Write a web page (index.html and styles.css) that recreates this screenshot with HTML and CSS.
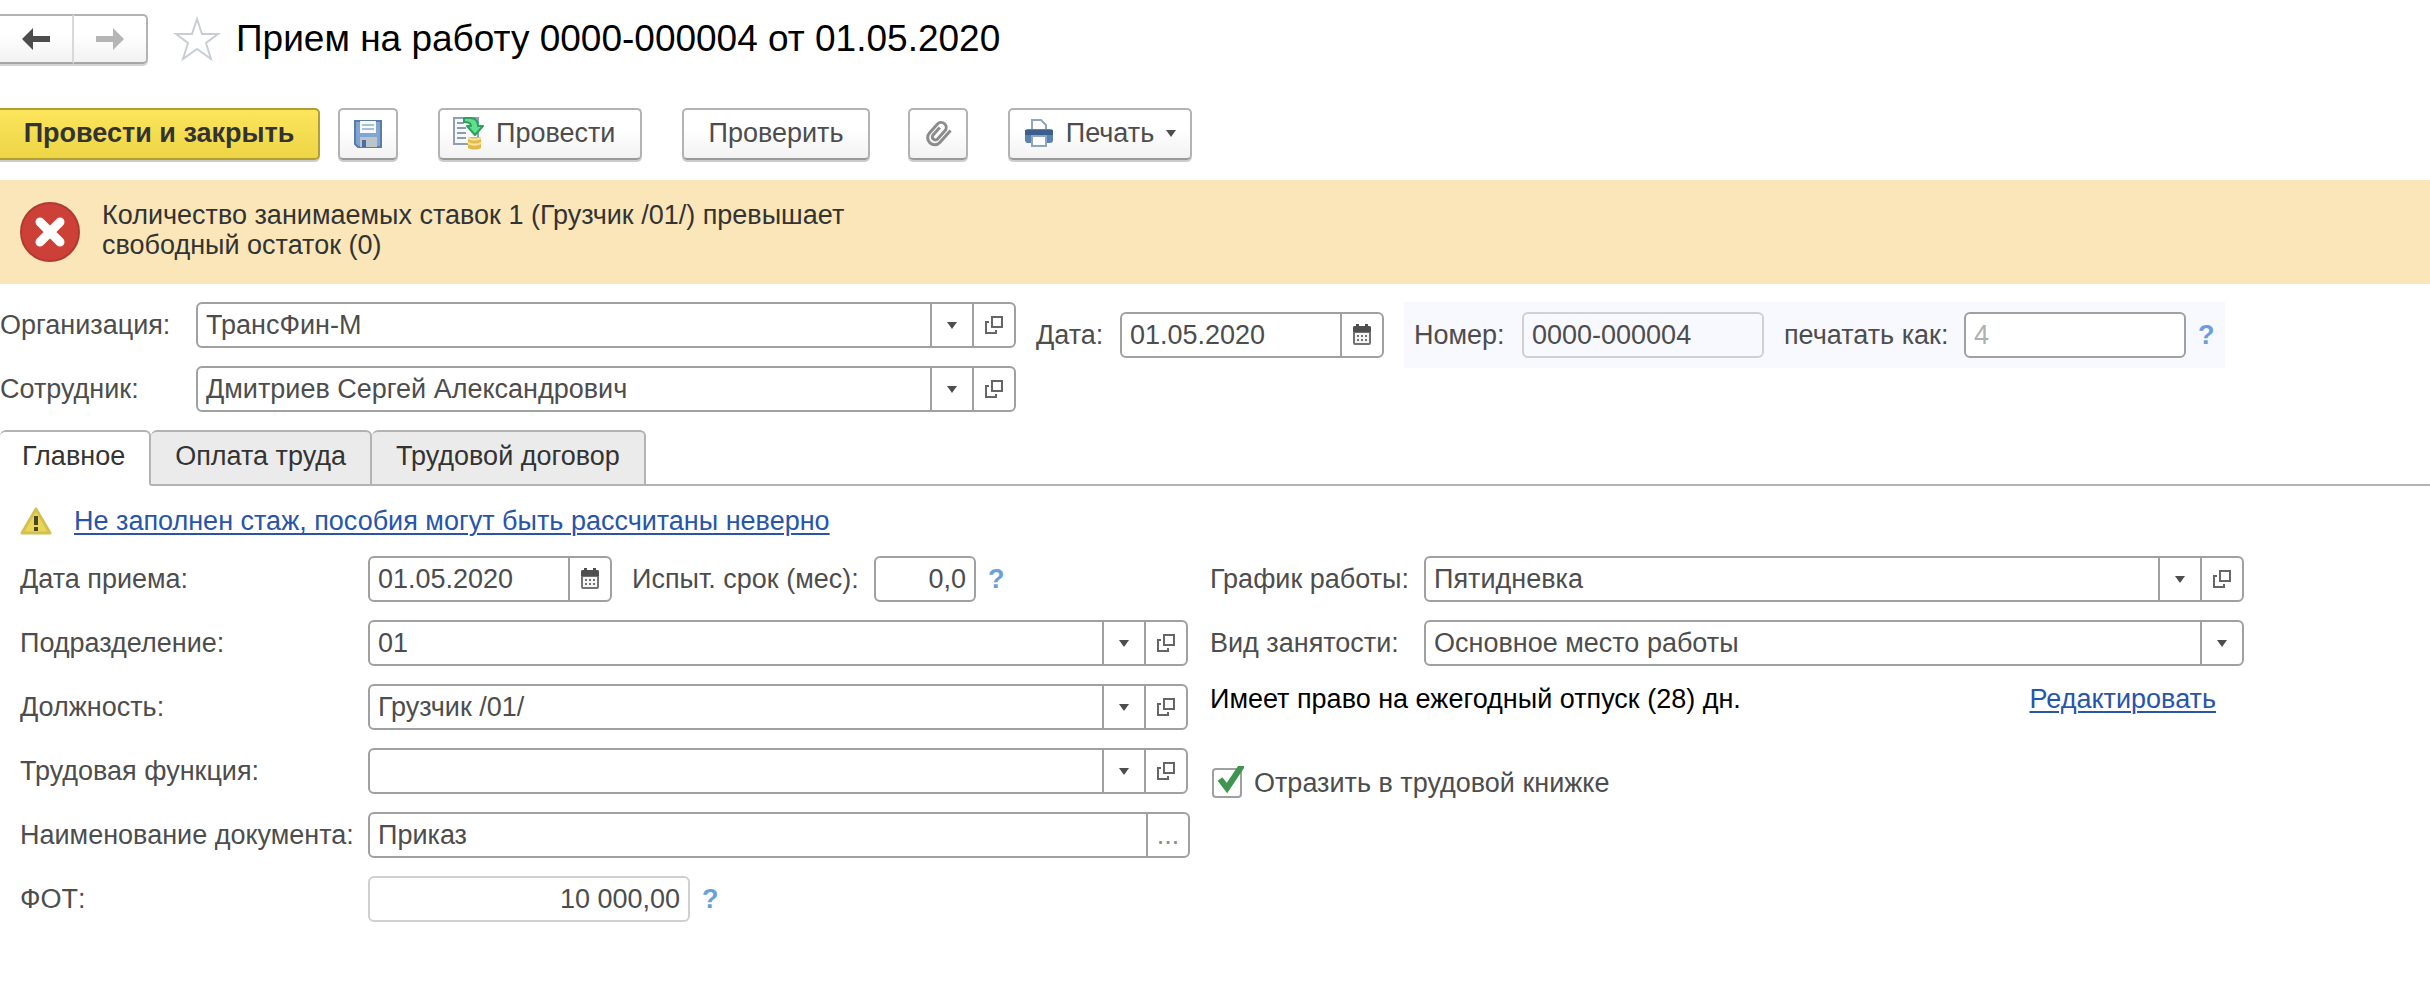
FILE: index.html
```html
<!DOCTYPE html>
<html lang="ru">
<head>
<meta charset="utf-8">
<title>Прием на работу 0000-000004 от 01.05.2020</title>
<meta name="viewport" content="width=device-width, initial-scale=1">
<link rel="stylesheet" href="styles.css">
</head>
<body>
<svg class="sprite" aria-hidden="true">
  <symbol id="caret" viewBox="0 0 10 7"><path d="M0 0h10L5 7z" fill="#4d4d4d"/></symbol>
  <symbol id="open" viewBox="0 0 20 20"><path d="M8 2h10v10H8z" fill="none" stroke="#666" stroke-width="2"/><path d="M5 7H2v11h10v-3" fill="none" stroke="#666" stroke-width="2"/></symbol>
  <symbol id="calendar" viewBox="0 0 20 22"><rect x="1" y="2" width="18" height="19" rx="2" fill="#737373"/><path d="M1 4q0-2 2-2h14q2 0 2 2v4H1z" fill="#4f4f4f"/><path d="M4 0h3v4H4zM13 0h3v4h-3z" fill="#4f4f4f"/><path d="M3 9h14v10H3z" fill="#f4f4f4"/><path d="M5 12h11M5 16h11" stroke="#737373" stroke-width="2" stroke-dasharray="2 2"/></symbol>
</svg>

<header class="header">
  <nav class="history" aria-label="История">
    <button type="button" class="history-button" aria-label="Назад"><svg width="30" height="24" viewBox="0 0 30 24"><path d="M1 12L12 1v8h17v6H12v8z" fill="#4d4d4d"/></svg></button>
    <button type="button" class="history-button history-next" aria-label="Вперед"><svg width="30" height="24" viewBox="0 0 30 24"><path d="M29 12L18 1v8H1v6h17v8z" fill="#b5b5b5"/></svg></button>
  </nav>
  <button type="button" class="star" aria-label="В избранное"><svg width="48" height="46" viewBox="0 0 48 46"><path d="M24 3l5 15h16L33 27l5 16-14-10-14 10 5-16L3 18h16z" fill="#fff" stroke="#c9ced4" stroke-width="2"/></svg></button>
  <h1 class="title">Прием на работу 0000-000004 от 01.05.2020</h1>
</header>

<div class="toolbar" role="toolbar">
  <button type="button" class="button button-primary">Провести и закрыть</button>
  <button type="button" class="button button-icon button-save" aria-label="Записать"><svg width="30" height="30" viewBox="0 0 30 30"><path d="M2 2h26v26H5l-3-3z" fill="#80a5d3" stroke="#587dad" stroke-width="2"/><path d="M7 2h16v12H7z" fill="#f7fafd"/><path d="M9 6h12M9 10h12" stroke="#a9bdd6" stroke-width="2"/><path d="M7 18h17v10H7z" fill="#bcc5ca"/><path d="M9 21h4v7H9z" fill="#4a6ea2"/></svg></button>
  <button type="button" class="button button-post"><svg width="32" height="34" viewBox="0 0 32 34"><path d="M2 2h24v26H2z" fill="#f6f9fb" stroke="#8fa0b4" stroke-width="2"/><path d="M5 7h7M5 12h9M5 17h9M5 22h9" stroke="#8e9cab" stroke-width="2"/><path d="M12 2h6c6 0 8 3 8 8h5l-8 9-8-9h4c0-3-2-4-7-4z" fill="#5fe08f" stroke="#2f9f5c" stroke-width="2" stroke-linejoin="round"/><path d="M16 21h13v11c-3 2-10 2-13 0z" fill="#e3b94c"/><path d="M16 22c4 2 9 2 13 0M16 27c4 2 9 2 13 0" stroke="#f9e596" stroke-width="2" fill="none"/></svg>Провести</button>
  <button type="button" class="button button-check">Проверить</button>
  <button type="button" class="button button-icon button-attach" aria-label="Присоединенные файлы"><svg width="30" height="30" viewBox="0 0 30 30"><path transform="rotate(42 15 15)" d="M22 4v16a7 7 0 0 1-14 0V8a5 5 0 0 1 10 0v11a3 3 0 0 1-6 0V9" fill="none" stroke="#8c8c8c" stroke-width="3"/></svg></button>
  <button type="button" class="button button-print"><svg width="30" height="30" viewBox="0 0 30 30"><path d="M8 12V2h9l5 5v5" fill="#fff" stroke="#8fa6c2" stroke-width="2"/><rect x="1" y="11" width="28" height="14" rx="3" fill="#5d82ae"/><rect x="1" y="12" width="28" height="5" fill="#3d5f8c"/><path d="M8 18h14v10H8z" fill="#fff" stroke="#8fa6c2" stroke-width="2"/></svg>Печать<svg class="print-caret" width="10" height="7"><use href="#caret"/></svg></button>
</div>

<section class="alert" role="alert">
  <svg width="60" height="62" viewBox="0 0 60 62"><circle cx="30" cy="31" r="29" fill="#cc4037" stroke="#b23a31" stroke-width="2"/><path d="M20 21l20 20M40 21L20 41" stroke="#fff" stroke-width="9" stroke-linecap="round"/></svg>
  <p class="alert-text">Количество занимаемых ставок 1 (Грузчик /01/) превышает свободный остаток (0)</p>
</section>

<form>
<div class="document">
  <div class="parties">
    <label for="org">Организация:</label>
    <div class="field"><input id="org" type="text" value="ТрансФин-М"><button type="button" aria-label="Выбрать"><svg width="10" height="7"><use href="#caret"/></svg></button><button type="button" aria-label="Открыть"><svg width="20" height="20"><use href="#open"/></svg></button></div>
    <label for="employee">Сотрудник:</label>
    <div class="field"><input id="employee" type="text" value="Дмитриев Сергей Александрович"><button type="button" aria-label="Выбрать"><svg width="10" height="7"><use href="#caret"/></svg></button><button type="button" aria-label="Открыть"><svg width="20" height="20"><use href="#open"/></svg></button></div>
  </div>
  <div class="document-date">
    <label for="date">Дата:</label>
    <div class="field"><input id="date" type="text" value="01.05.2020"><button type="button" aria-label="Календарь"><svg width="20" height="22"><use href="#calendar"/></svg></button></div>
  </div>
  <div class="number">
    <label for="number">Номер:</label>
    <div class="field field-readonly number-value"><input id="number" type="text" value="0000-000004" readonly></div>
    <label for="print-as" class="print-as-label">печатать как:</label>
    <div class="field number-print"><input id="print-as" type="text" placeholder="4"></div>
    <button type="button" class="help">?</button>
  </div>
</div>

<div class="tabs" role="tablist">
  <button type="button" class="tab tab-active" role="tab" aria-selected="true">Главное</button>
  <button type="button" class="tab" role="tab" aria-selected="false">Оплата труда</button>
  <button type="button" class="tab" role="tab" aria-selected="false">Трудовой договор</button>
</div>

<p class="notice">
  <svg width="32" height="28" viewBox="0 0 32 28"><path d="M16 2l14 24H2z" fill="#ecd658" stroke="#d3c050" stroke-width="3" stroke-linejoin="round"/><path d="M14 9h4v9h-4zM14 20h4v4h-4z" fill="#4a4522"/></svg>
  <a href="#experience">Не заполнен стаж, пособия могут быть рассчитаны неверно</a>
</p>

<div class="main">
  <div class="left">
    <label for="hire-date">Дата приема:</label>
    <div class="inline">
      <div class="field hire-date"><input id="hire-date" type="text" value="01.05.2020"><button type="button" aria-label="Календарь"><svg width="20" height="22"><use href="#calendar"/></svg></button></div>
      <label for="probation" class="probation-label">Испыт. срок (мес):</label>
      <div class="field probation"><input id="probation" class="numeric" type="text" value="0,0"></div>
      <button type="button" class="help">?</button>
    </div>
    <label for="department">Подразделение:</label>
    <div class="field lookup"><input id="department" type="text" value="01"><button type="button" aria-label="Выбрать"><svg width="10" height="7"><use href="#caret"/></svg></button><button type="button" aria-label="Открыть"><svg width="20" height="20"><use href="#open"/></svg></button></div>
    <label for="position">Должность:</label>
    <div class="field lookup"><input id="position" type="text" value="Грузчик /01/"><button type="button" aria-label="Выбрать"><svg width="10" height="7"><use href="#caret"/></svg></button><button type="button" aria-label="Открыть"><svg width="20" height="20"><use href="#open"/></svg></button></div>
    <label for="function">Трудовая функция:</label>
    <div class="field lookup"><input id="function" type="text"><button type="button" aria-label="Выбрать"><svg width="10" height="7"><use href="#caret"/></svg></button><button type="button" aria-label="Открыть"><svg width="20" height="20"><use href="#open"/></svg></button></div>
    <label for="doc-name">Наименование документа:</label>
    <div class="field"><input id="doc-name" type="text" value="Приказ"><button type="button" class="more">...</button></div>
    <label for="payroll">ФОТ:</label>
    <div class="inline">
      <div class="field field-readonly payroll"><input id="payroll" class="numeric" type="text" value="10 000,00" readonly></div>
      <button type="button" class="help">?</button>
    </div>
  </div>
  <div class="right">
    <div class="right-fields">
      <label for="schedule">График работы:</label>
      <div class="field"><input id="schedule" type="text" value="Пятидневка"><button type="button" aria-label="Выбрать"><svg width="10" height="7"><use href="#caret"/></svg></button><button type="button" aria-label="Открыть"><svg width="20" height="20"><use href="#open"/></svg></button></div>
      <label for="employment">Вид занятости:</label>
      <div class="field field-select"><select id="employment"><option>Основное место работы</option></select><span class="select-arrow"><svg width="10" height="7"><use href="#caret"/></svg></span></div>
    </div>
    <div class="vacation"><span>Имеет право на ежегодный отпуск (28) дн.</span><a href="#vacation">Редактировать</a></div>
    <label class="check"><input type="checkbox" checked><svg class="check-mark" width="28" height="32" viewBox="0 0 28 32"><path d="M4 13l7 9L27-2" fill="none" stroke="#3f9450" stroke-width="6"/></svg>Отразить в трудовой книжке</label>
  </div>
</div>
</form>
</body>
</html>
```
FILE: styles.css
```css
* { box-sizing: border-box; }

body {
  margin: 0;
  background: #fff;
  color: #4d4d4d;
  font: 27px/30px "Liberation Sans", Arial, sans-serif;
}

button, input, select { margin: 0; color: inherit; font: inherit; }
button { cursor: pointer; white-space: nowrap; }
svg { display: block; flex: none; }
a { color: #2855ab; text-decoration-thickness: 2px; text-underline-offset: 3px; }
.sprite { position: absolute; width: 0; height: 0; }

.header { display: flex; align-items: center; padding-top: 14px; }
.history { display: flex; }
.history-button {
  display: flex;
  align-items: center;
  justify-content: center;
  width: 74px;
  height: 50px;
  padding: 0;
  border: 2px solid #b3b3b3;
  border-left: 0;
  border-right-color: #d9d9d9;
  border-bottom-color: #a6a6a6;
  background: linear-gradient(#fff 40%, #f2f2f2);
  box-shadow: 0 2px #d4d4d4;
}
.history-next { border-right-color: #b3b3b3; border-radius: 0 5px 5px 0; }
.star { margin-left: 25px; padding: 0; border: 0; background: none; }
.title { margin: 0 0 0 15px; color: #000; font-size: 37px; font-weight: 400; line-height: 50px; }

.toolbar { display: flex; padding: 44px 0 20px; }
.button {
  display: flex;
  align-items: center;
  justify-content: center;
  height: 52px;
  padding: 0 24px 2px;
  border: 2px solid #b3b3b3;
  border-bottom-color: #999;
  border-radius: 5px;
  background: linear-gradient(#fff 40%, #f2f2f2);
  box-shadow: 0 2px #ccc;
}
.button-primary {
  width: 320px;
  border-color: #b39f2d;
  border-left: 0;
  border-radius: 0 5px 5px 0;
  background: linear-gradient(#fde55c, #edd546);
  color: #333;
  font-weight: 700;
}
.button-icon { width: 60px; padding: 0; }
.button-save { margin-left: 18px; }
.button-post { justify-content: flex-start; width: 204px; margin-left: 40px; padding-left: 12px; gap: 12px; }
.button-check { width: 188px; margin-left: 40px; }
.button-attach { margin-left: 38px; }
.button-print { width: 184px; margin-left: 40px; gap: 12px; padding-right: 12px; padding-left: 12px; }

.alert {
  display: flex;
  align-items: center;
  gap: 22px;
  min-height: 104px;
  padding: 0 20px;
  background: #fae6b8;
  color: #333;
}
.alert-text { max-width: 760px; margin: 0 0 4px; }

.field {
  display: flex;
  flex: 1;
  height: 46px;
  border: 2px solid #a0a0a0;
  border-radius: 6px;
  background: #fff;
}
.field input, .field select {
  flex: 1;
  min-width: 0;
  width: 100%;
  padding: 0 8px;
  border: 0;
  outline: 0;
  background: none;
  appearance: none;
}
.field input::placeholder { color: #b0b0b0; opacity: 1; }
.field .numeric { text-align: right; }
.field button, .select-arrow {
  display: flex;
  flex: none;
  align-items: center;
  justify-content: center;
  width: 42px;
  padding: 0;
  border: 0;
  border-left: 2px solid #a0a0a0;
  background: none;
}
.field-readonly { border-color: #d0d0d0; background: none; }
.field-select { display: grid; grid-template-columns: minmax(0, 1fr) 42px; }
.field-select select { grid-area: 1 / 1 / 2 / 3; }
.select-arrow { grid-area: 1 / 2; pointer-events: none; }
.field .more { color: #8c8c8c; }
.help { padding: 0; border: 0; background: none; color: #6b9fd8; font-weight: 700; }

.document { display: flex; align-items: flex-start; padding-top: 18px; }
.parties {
  display: grid;
  grid-template-columns: 196px minmax(0, 820px);
  row-gap: 18px;
  align-items: center;
}
.document-date { display: flex; align-items: center; width: 348px; margin: 10px 0 0 20px; }
.document-date label { width: 84px; }
.number {
  display: flex;
  align-items: center;
  margin-left: 20px;
  padding: 10px;
  background: #f8f8ff;
}
.number > label { width: 108px; }
.number .print-as-label { width: 180px; margin-left: 20px; }
.number-value { flex: none; width: 242px; }
.number-print { flex: none; width: 222px; margin-right: 12px; }

.tabs { display: flex; margin-top: 18px; }
.tabs::after { flex: 1; border-bottom: 2px solid #b3b3b3; content: ""; }
.tab {
  height: 56px;
  padding: 0 24px 4px;
  border: 2px solid #b3b3b3;
  border-left: 0;
  border-radius: 6px 6px 0 0;
  background: #ebebeb;
  color: #333;
}
.tab-active { padding-left: 22px; border-bottom-color: #fff; background: #fff; }

.notice { display: flex; align-items: center; gap: 22px; margin: 0; padding: 20px 20px 0; }

.main {
  display: grid;
  grid-template-columns: minmax(0, 1170px) minmax(0, 1034px);
  column-gap: 20px;
  padding: 20px;
}
.left {
  display: grid;
  grid-template-columns: 348px minmax(0, 1fr);
  row-gap: 18px;
  align-items: center;
}
.lookup { margin-right: 2px; }
.inline { display: flex; align-items: center; }
.inline .field { flex: none; }
.inline .help { margin-left: 12px; }
.hire-date { width: 244px; }
.probation-label { width: 242px; padding-left: 20px; white-space: nowrap; }
.inline .probation { width: 102px; margin-left: 20px; }
.payroll { width: 322px; }
.right-fields {
  display: grid;
  grid-template-columns: 214px minmax(0, 1fr);
  row-gap: 18px;
  align-items: center;
}
.vacation { display: flex; justify-content: space-between; margin-top: 18px; padding-right: 28px; }
.vacation span { color: #000; }
.check { display: flex; position: relative; align-items: center; margin-top: 54px; gap: 12px; }
.check input {
  width: 30px;
  height: 30px;
  margin-left: 2px;
  border: 2px solid #a0a0a0;
  border-radius: 4px;
  background: #fff;
  appearance: none;
}
.check-mark { position: absolute; top: -2px; left: 6px; pointer-events: none; }
.check input:not(:checked) + .check-mark { display: none; }
```
